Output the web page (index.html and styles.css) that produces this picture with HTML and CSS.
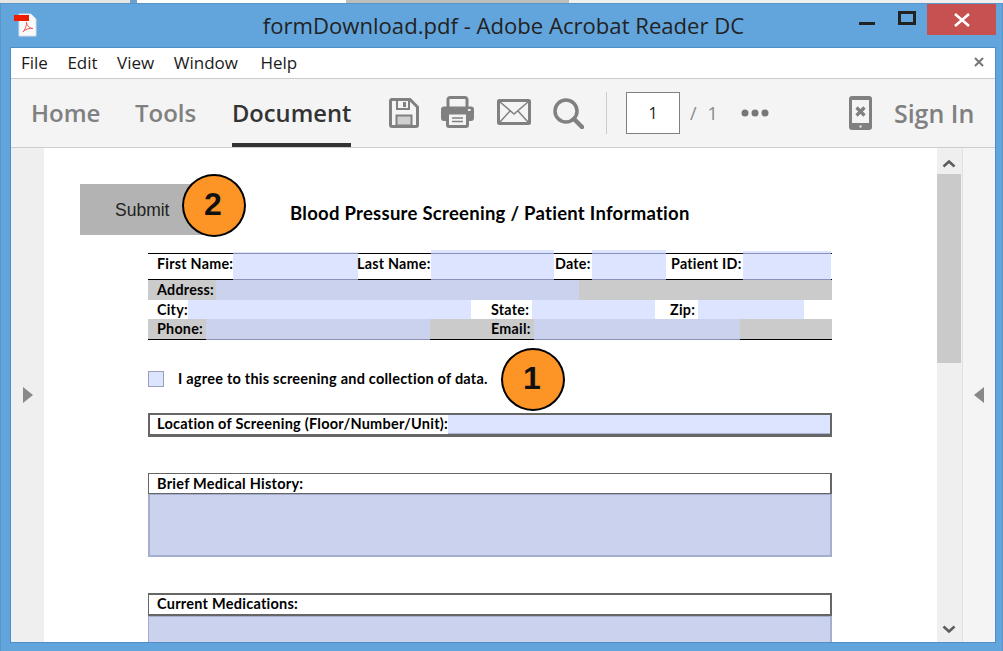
FILE: index.html
```html
<!DOCTYPE html>
<html>
<head>
    <title>formDownload.pdf - Adobe Acrobat Reader DC</title>
    <link rel="stylesheet" href="styles.css">
</head>
<body>

<div class="desktop-strip">
    <span class="strip-a"></span><span class="strip-b"></span><span class="strip-c"></span><span class="strip-d"></span><span class="strip-e"></span>
</div>

<div class="window">

    <div class="titlebar">
        <div class="app-icon">
            <svg width="24" height="24" viewBox="0 0 24 24">
                <path d="M5 1H17L22 6V23H5Z" fill="#fafafa" stroke="#d8dde2" stroke-width="1"/>
                <path d="M9 19C11 17 13 12 12.5 9C12.5 12 15 15 19 15.500C16 15 11 16 9 19Z" fill="none" stroke="#ee5a55" stroke-width="1"/>
                <rect x="0" y="2" width="15" height="6" fill="#ee1c00"/>
            </svg>
        </div>
        <div class="title">formDownload.pdf - Adobe Acrobat Reader DC</div>
        <div class="controls">
            <span class="ctl-min"></span>
            <span class="ctl-max"></span>
            <span class="ctl-close">
                <svg width="18" height="14" viewBox="0 0 18 14"><path d="M2 1L16 13M16 1L2 13" stroke="#fff" stroke-width="2.600" fill="none"/></svg>
            </span>
        </div>
    </div>

    <div class="client">

        <div class="menubar">
            <span class="menu-item">File</span>
            <span class="menu-item">Edit</span>
            <span class="menu-item">View</span>
            <span class="menu-item">Window</span>
            <span class="menu-item menu-help">Help</span>
            <svg class="menu-close" width="10" height="10" viewBox="0 0 10 10"><path d="M1 1L9 9M9 1L1 9" stroke="#777" stroke-width="2" fill="none"/></svg>
        </div>

        <div class="toolbar">
            <span class="tab tab-home">Home</span>
            <span class="tab tab-tools">Tools</span>
            <span class="tab tab-document">Document</span>

            <svg class="tool tool-save" width="30" height="30" viewBox="0 0 30 30">
                <path d="M2.500 1.500H21L28.500 9V27A1.500 1.500 0 0 1 27 28.500H3A1.500 1.500 0 0 1 1.500 27V2.500Z" fill="none" stroke="#808080" stroke-width="3"/>
                <path d="M8 2V11H20V2" fill="none" stroke="#808080" stroke-width="2"/>
                <rect x="14" y="4" width="3" height="5" fill="#808080"/>
                <rect x="7.500" y="17.500" width="15" height="10" fill="#d0d0d0" stroke="#808080" stroke-width="2"/>
            </svg>

            <svg class="tool tool-print" width="33" height="32" viewBox="0 0 33 32">
                <path d="M7 12V3A2 2 0 0 1 9 1.500H24A2 2 0 0 1 26 3V12" fill="none" stroke="#808080" stroke-width="3"/>
                <path d="M3 10.500H30A3 3 0 0 1 33 13.500V22A3 3 0 0 1 30 25H3A3 3 0 0 1 0 22V13.500A3 3 0 0 1 3 10.500Z" fill="#808080"/>
                <rect x="6.500" y="17" width="20" height="13.500" rx="1.500" fill="#f4f4f4" stroke="#808080" stroke-width="3"/>
                <path d="M11 22H22M11 25.500H22" stroke="#808080" stroke-width="1.500"/>
                <rect x="27" y="13" width="2.500" height="2" fill="#f4f4f4"/>
            </svg>

            <svg class="tool tool-mail" width="34" height="26" viewBox="0 0 34 26">
                <rect x="1.500" y="1.500" width="31" height="23" rx="1" fill="none" stroke="#808080" stroke-width="3"/>
                <path d="M3 3L17 15L31 3M3 23L13 12M31 23L21 12" fill="none" stroke="#808080" stroke-width="1.500"/>
            </svg>

            <svg class="tool tool-search" width="31" height="31" viewBox="0 0 31 31">
                <circle cx="13" cy="13" r="11" fill="none" stroke="#808080" stroke-width="3.500"/>
                <path d="M21 21L29 29" stroke="#808080" stroke-width="4.500" stroke-linecap="round"/>
            </svg>

            <span class="tool-divider"></span>
            <span class="page-box">1</span>
            <span class="page-slash">/</span>
            <span class="page-total">1</span>

            <svg class="tool-dots" width="28" height="8" viewBox="0 0 28 8">
                <circle cx="4" cy="4" r="3.500" fill="#777"/><circle cx="14" cy="4" r="3.500" fill="#777"/><circle cx="24" cy="4" r="3.500" fill="#777"/>
            </svg>

            <svg class="tool-phone" width="23" height="34" viewBox="0 0 23 34">
                <rect x="0" y="0" width="23" height="34" rx="3" fill="#808080"/>
                <rect x="3" y="4" width="17" height="23" fill="#f4f4f4"/>
                <path d="M7.500 11.500L15.500 19.500M15.500 11.500L7.500 19.500" stroke="#808080" stroke-width="3.200" fill="none"/>
                <rect x="10.500" y="29.500" width="2" height="2" fill="#f4f4f4"/>
            </svg>

            <span class="sign-in">Sign In</span>
        </div>

        <div class="viewer">
            <div class="rail rail-left">
                <svg width="10" height="16" viewBox="0 0 10 16"><path d="M0 0L10 8L0 16Z" fill="#888"/></svg>
            </div>

            <div class="page">
                <div class="form-head">
                    <div class="submit">Submit</div>
                    <div class="form-title">Blood Pressure Screening / Patient Information</div>
                </div>

                <div class="info">
                    <div class="row row-name">
                        <span class="label">First Name:</span>
                        <span class="field raise-1"></span>
                        <span class="label flush">Last Name:</span>
                        <span class="field raise-3"></span>
                        <span class="label tight">Date:</span>
                        <span class="field raise-3"></span>
                        <span class="label indent-5">Patient ID:</span>
                        <span class="field raise-2"></span>
                    </div>
                    <div class="row row-address shaded">
                        <span class="label">Address:</span>
                        <span class="field dark"></span>
                    </div>
                    <div class="row row-city">
                        <span class="label">City:</span>
                        <span class="field plain"></span>
                        <span class="label indent-20">State:</span>
                        <span class="field plain"></span>
                        <span class="label indent-15">Zip:</span>
                        <span class="field plain"></span>
                    </div>
                    <div class="row row-phone shaded">
                        <span class="label">Phone:</span>
                        <span class="field dark"></span>
                        <span class="label indent-61">Email:</span>
                        <span class="field dark"></span>
                    </div>
                </div>

                <div class="agree">
                    <span class="checkbox"></span>
                    <span class="agree-text">I agree to this screening and collection of data.</span>
                </div>

                <div class="location">
                    <span class="label">Location of Screening (Floor/Number/Unit):</span>
                    <span class="location-field"></span>
                </div>

                <div class="section-head thin">Brief Medical History:</div>
                <div class="section-field tall"></div>

                <div class="section-head thick">Current Medications:</div>
                <div class="section-field"></div>

                <div class="badge badge-submit">2</div>
                <div class="badge badge-agree">1</div>
            </div>

            <div class="scrollbar">
                <svg class="chevron" width="14" height="9" viewBox="0 0 14 9"><path d="M1.500 7.500L7 2.500L12.500 7.500" fill="none" stroke="#5c5c5c" stroke-width="2.500"/></svg>
                <div class="thumb"></div>
                <svg class="chevron chevron-down" width="14" height="9" viewBox="0 0 14 9"><path d="M1.500 1.500L7 6.500L12.500 1.500" fill="none" stroke="#5c5c5c" stroke-width="2.500"/></svg>
            </div>

            <div class="rail rail-right">
                <svg width="10" height="16" viewBox="0 0 10 16"><path d="M10 0L0 8L10 16Z" fill="#888"/></svg>
            </div>
        </div>

    </div>
</div>

</body>
</html>
```

FILE: styles.css
```css
html, body {
    margin: 0;
    height: 651px;
    overflow: hidden;
}
body {
    background: #62a5dd;
    font-family: "Open Sans", "Noto Sans", sans-serif;
}

/* bit of desktop showing above the window */
.desktop-strip {
    display: flex;
    height: 3px;
}
.strip-a { width: 130px; background: #e6e6e6; }
.strip-b { width: 7px; background: #6d9fcc; }
.strip-c { width: 209px; background: #fff; }
.strip-d { width: 223px; background: #bdbdbd; }
.strip-e { flex: 1; background: #f0f0f0; }

.window {
    height: 648px;
    box-sizing: border-box;
    border: 1px solid #5b94c8;
    border-bottom: 0;
    display: flex;
    flex-direction: column;
}

/* title bar */
.titlebar {
    height: 43px;
    display: grid;
    grid-template-columns: 1fr auto 1fr;
    flex: none;
}
.app-icon {
    padding: 9px 0 0 13px;
}
.title {
    font-size: 22.100px;
    line-height: 42px;
    color: #222;
    white-space: nowrap;
    padding-left: 4px;
}
.controls {
    display: flex;
    justify-content: flex-end;
    align-items: flex-start;
    padding-right: 6px;
}
.ctl-min {
    width: 16px;
    height: 3px;
    background: #222;
    margin: 18px 23px 0 0;
}
.ctl-max {
    width: 18px;
    height: 14px;
    box-sizing: border-box;
    border: 3px solid #222;
    margin: 7px 11px 0 0;
}
.ctl-close {
    width: 69px;
    height: 31px;
    background: #c75050;
    display: flex;
    align-items: center;
    justify-content: center;
}

/* everything inside the frame */
.client {
    flex: 1;
    min-height: 0;
    margin: 0 6px 8px 9px;
    border: 1px solid #4f8dc6;
    background: #f4f4f4;
    display: flex;
    flex-direction: column;
}

.menubar {
    height: 30px;
    box-sizing: content-box;
    background: #fff;
    border-bottom: 1px solid #ccc;
    display: flex;
    align-items: flex-start;
    padding-left: 10px;
    flex: none;
    font-size: 17px;
    line-height: 29px;
    color: #1a1a1a;
}
.menu-item {
    margin-right: 19.500px;
}
.menu-help {
    margin-left: 3px;
}
.menu-close {
    margin: 9px 11px 0 auto;
}

.toolbar {
    height: 69px;
    box-sizing: border-box;
    border-bottom: 1px solid #ccc;
    display: flex;
    align-items: flex-start;
    flex: none;
}
.tab {
    font-size: 24px;
    line-height: 68px;
    font-weight: 600;
    color: #808080;
    white-space: nowrap;
}
.tab-home { margin-left: 20px; width: 104px; }
.tab-tools { width: 97px; }
.tab-document {
    width: 119px;
    color: #333;
    height: 68px;
    box-sizing: border-box;
    border-bottom: 4px solid #333;
    font-size: 23.700px;
}
.tool { flex: none; }
.tool-save { margin: 19px 0 0 38px; }
.tool-print { margin: 17px 0 0 22px; }
.tool-mail { margin: 20px 0 0 23px; }
.tool-search { margin: 19px 0 0 22px; }
.tool-divider {
    width: 1px;
    height: 42px;
    background: #ccc;
    margin: 13px 0 0 22px;
}
.page-box {
    width: 54px;
    height: 42px;
    box-sizing: border-box;
    border: 1px solid #808080;
    background: #fff;
    margin: 13px 0 0 19px;
    text-align: center;
    font-size: 16px;
    line-height: 40px;
    color: #222;
}
.page-slash, .page-total {
    font-size: 18px;
    line-height: 42px;
    margin-top: 13px;
    color: #8a8a8a;
}
.page-slash { margin-left: 10px; }
.page-total { margin-left: 11px; }
.tool-dots { margin: 30px 0 0 23px; }
.tool-phone { margin: 17px 0 0 80px; }
.sign-in {
    font-size: 25px;
    line-height: 68px;
    font-weight: 600;
    color: #808080;
    margin-left: 22px;
    white-space: nowrap;
}

/* document area */
.viewer {
    flex: 1;
    min-height: 0;
    display: flex;
}
.rail {
    flex: none;
    display: flex;
    align-items: center;
    justify-content: center;
    box-sizing: border-box;
}
.rail-left {
    width: 33px;
    background: #efefef;
}
.rail-right {
    width: 32px;
    background: #f4f4f4;
}

.page {
    position: relative;
    width: 893px;
    flex: none;
    background: #fff;
    overflow: hidden;
    box-sizing: border-box;
    padding: 36px 105px 0 104px;
}
.form-head {
    display: flex;
    margin-left: -68px;
    height: 51px;
}
.submit {
    width: 125px;
    flex: none;
    background: #b3b3b3;
    font: 17.500px/52px "Liberation Sans", Arial, sans-serif;
    color: #222;
    padding-left: 35px;
    box-sizing: border-box;
}
.form-title {
    font: bold 18.500px/59px Lato, sans-serif;
    letter-spacing: 0.27px;
    color: #000;
    margin-left: 85px;
    white-space: nowrap;
}

.info {
    margin-top: 18px;
    font: bold 14.300px Lato, sans-serif;
    letter-spacing: 0.25px;
    color: #000;
}
.row {
    display: grid;
    box-sizing: border-box;
}
.label {
    padding-left: 9px;
    white-space: nowrap;
}
.shaded { background: #cbcbcb; }
.row-name {
    height: 27px;
    border-top: 1px solid #000;
    border-bottom: 1px solid #000;
    line-height: 20px;
    grid-template-columns: 85px 125px 73px 123px 38px 74px 77px 88px;
}
.row-address {
    height: 20px;
    line-height: 20px;
    grid-template-columns: 68px 363px;
}
.row-city {
    height: 19px;
    line-height: 19px;
    grid-template-columns: 40px 283px 61px 123px 43px 106px;
}
.row-phone {
    height: 21px;
    line-height: 20px;
    border-bottom: 1px solid #000;
    grid-template-columns: 58px 224px 104px 206px;
}
.flush { padding-left: 0; margin-left: -1px; }
.tight { padding-left: 1px; }
.indent-5 { padding-left: 5px; }
.indent-15 { padding-left: 15px; }
.indent-20 { padding-left: 20px; }
.indent-61 { padding-left: 61px; }

.field {
    background: #dde4ff;
}
.row-name .field {
    margin: -1px 0;
    border-top: 1px solid #8a90b8;
    border-bottom: 1px solid #8a90b8;
}
.raise-1 { box-shadow: 0 -1px 0 #dde4ff; }
.raise-2 { box-shadow: 0 -2px 0 #dde4ff; }
.raise-3 { box-shadow: 0 -3px 0 #dde4ff; }
.field.dark {
    background: #cad2ee;
}
.row-phone .field {
    margin-bottom: -1px;
    border-bottom: 1px solid #8a90b8;
}

.agree {
    margin-top: 31px;
    height: 16px;
    display: flex;
    align-items: center;
    font: bold 14.500px Lato, sans-serif;
    letter-spacing: 0.23px;
    color: #000;
}
.checkbox {
    width: 16px;
    height: 16px;
    box-sizing: border-box;
    border: 1px solid #9aa0b8;
    background: #dde4ff;
}
.agree-text {
    margin: -2px 0 0 14px;
    white-space: nowrap;
}

.location {
    margin-top: 26px;
    height: 24px;
    box-sizing: border-box;
    border: 2px solid #666;
    border-bottom-width: 3px;
    display: flex;
    font: bold 14.500px/18px Lato, sans-serif;
    letter-spacing: 0.25px;
    color: #000;
}
.location .label { padding-left: 7px; }
.location-field {
    flex: 1;
    background: #dde4ff;
    border-bottom: 1px solid #aab2d8;
}

.section-head {
    margin-top: 36px;
    background: #fff;
    box-sizing: border-box;
    padding-left: 8px;
    border-style: solid;
    border-color: #666;
    font: bold 14.500px Lato, sans-serif;
    letter-spacing: 0.25px;
    color: #000;
}
.section-head.thin {
    height: 21px;
    border-width: 1px 2px 1px 1px;
    line-height: 20px;
}
.section-head.thick {
    height: 23px;
    border-width: 2px 2px 2px 1px;
    line-height: 18px;
}
.section-field {
    height: 60px;
    box-sizing: border-box;
    background: #cad2ee;
    border: 1px solid #a6aed0;
    border-right-width: 2px;
}
.section-field.tall {
    height: 63px;
    border-left-width: 2px;
    border-bottom-width: 2px;
}

/* orange callouts sit on top of the form */
.badge {
    position: absolute;
    width: 64px;
    height: 63px;
    box-sizing: border-box;
    border: 2px solid #000;
    border-radius: 50%;
    background: #fd9526;
    text-align: center;
    padding-right: 2px;
    font: bold 32px/56px "Liberation Sans", Arial, sans-serif;
    color: #111;
}
.badge-submit { left: 138px; top: 26px; }
.badge-agree { left: 457px; top: 200px; }

.scrollbar {
    width: 26px;
    flex: none;
    box-sizing: border-box;
    background: #efefef;
    border-right: 1px solid #e2e2e2;
    display: flex;
    flex-direction: column;
    align-items: center;
    padding-right: 1px;
}
.chevron {
    flex: none;
    margin-top: 11px;
    margin-bottom: 6px;
}
.chevron-down {
    margin-top: auto;
    margin-bottom: 8px;
}
.thumb {
    width: 24px;
    height: 189px;
    background: #cacaca;
    flex: none;
}
```
